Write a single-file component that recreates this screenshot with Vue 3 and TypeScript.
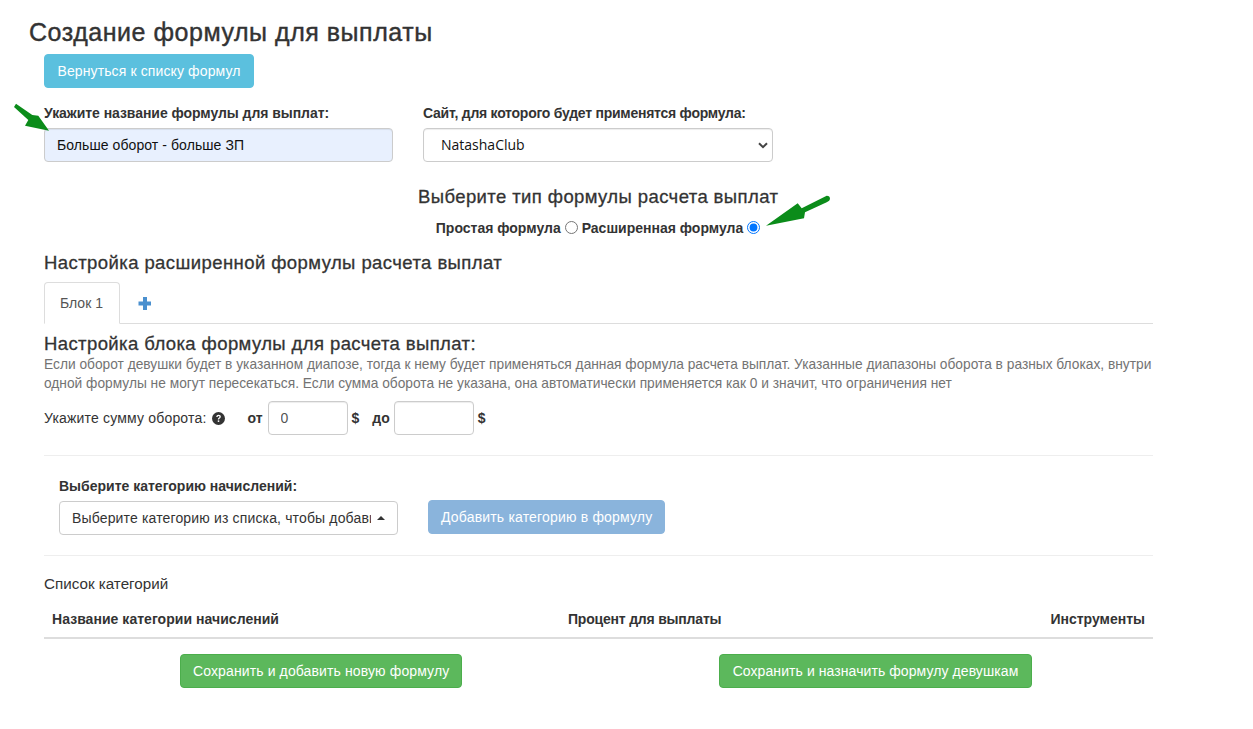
<script setup lang="ts">
const helpText =
  'Если оборот девушки будет в указанном диапозе, тогда к нему будет применяться данная формула расчета выплат. Указанные диапазоны оборота в разных блоках, внутри одной формулы не могут пересекаться. Если сумма оборота не указана, она автоматически применяется как 0 и значит, что ограничения нет'
</script>

<template>
  <div class="page">
    <h1 class="title">Создание формулы для выплаты</h1>
    <div class="content">
      <button class="btn info">Вернуться к списку формул</button>

      <div class="top-fields">
        <div class="field name-field">
          <label class="lbl">Укажите название формулы для выплат:</label>
          <input class="control filled" value="Больше оборот - больше ЗП" />
        </div>
        <div class="field site-field">
          <label class="lbl site-lbl">Сайт, для которого будет применятся формула:</label>
          <div class="select-wrap">
            <select class="control site-select">
              <option>NatashaClub</option>
            </select>
            <svg class="chevron" width="10" height="7" viewBox="0 0 10 7">
              <path d="M1 1.2 L5 5.2 L9 1.2" fill="none" stroke="#444" stroke-width="2" />
            </svg>
          </div>
        </div>
      </div>

      <h4 class="type-heading">Выберите тип формулы расчета выплат</h4>
      <div class="type-row">
        <label class="radio-lbl">Простая формула <input type="radio" name="t" /></label>
        <label class="radio-lbl">Расширенная формула <input type="radio" name="t" checked /></label>
      </div>

      <h4 class="adv-heading">Настройка расширенной формулы расчета выплат</h4>
      <div class="tabs">
        <div class="tab active">Блок 1</div>
        <div class="tab plus">
          <svg width="14" height="14" viewBox="0 0 14 14">
            <path d="M5 1h4v4.5h4v4H9V14H5V9.5H.5v-4H5z" fill="#4a90cf" />
          </svg>
        </div>
      </div>

      <h4 class="block-heading">Настройка блока формулы для расчета выплат:</h4>
      <p class="help">{{ helpText }}</p>

      <div class="turnover">
        <span class="turnover-label">Укажите сумму оборота:</span>
        <svg class="q" width="13" height="13" viewBox="0 0 14 14">
          <circle cx="7" cy="7" r="7" fill="#333" />
          <path d="M4.6 5.3c.1-1.5 1.1-2.3 2.5-2.3s2.4.8 2.4 2c0 1-.6 1.5-1.2 1.9-.5.3-.7.6-.7 1.2H6.3c0-1 .3-1.5 1-2 .5-.3.8-.6.8-1 0-.5-.4-.8-1-.8s-1 .4-1.1 1z" fill="#fff" />
          <rect x="6.2" y="9" width="1.6" height="1.7" fill="#fff" />
        </svg>
        <b class="from">от</b>
        <input class="control small" value="0" />
        <b class="dollar">$</b>
        <b class="to">до</b>
        <input class="control small" />
        <b class="dollar">$</b>
      </div>

      <hr class="rule first" />

      <div class="category">
        <div class="cat-field">
          <label class="lbl cat-lbl">Выберите категорию начислений:</label>
          <div class="dropdown">
            <span class="dropdown-text">Выберите категорию из списка, чтобы добавить</span>
            <span class="caret"></span>
          </div>
        </div>
        <button class="btn primary-disabled">Добавить категорию в формулу</button>
      </div>

      <hr class="rule second" />

      <div class="list-title">Список категорий</div>
      <div class="table-head">
        <span class="col-name">Название категории начислений</span>
        <span class="col-percent">Процент для выплаты</span>
        <span class="col-tools">Инструменты</span>
      </div>

      <div class="actions">
        <button class="btn success">Сохранить и добавить новую формулу</button>
        <button class="btn success tight">Сохранить и назначить формулу девушкам</button>
      </div>
    </div>

    <svg class="arrow arrow-a" width="40" height="32" viewBox="0 0 40 32">
      <path d="M2 .7 L18.3 12 L24.3 12.7 L35 27.7 L11 22.7 L14.3 17 L0 4 Z" fill="#0b8c1a" />
    </svg>
    <svg class="arrow arrow-b" width="70" height="42" viewBox="0 0 70 42">
      <path d="M1 31.7 L32.7 9.3 L36.7 14.3 L61.7 1.7 Q65 1.7 65 5 Q65 7 61.7 8.3 L40 18.3 L39 24.3 Z" fill="#0b8c1a" />
    </svg>
  </div>
</template>

<style>
body { background: #fff; }
</style>

<style scoped>
.page {
  position: relative;
  height: 729px;
  overflow: hidden;
  font-family: "Liberation Sans", Arial, sans-serif;
  font-size: 14px;
  line-height: 20px;
  color: #333;
  background: #fff;
}
.title {
  margin: 0;
  padding: 18px 0 0 29px;
  font-size: 25px;
  letter-spacing: .53px;
  line-height: 28px;
  font-weight: 400;
  color: #333;
  -webkit-text-stroke: .4px #333;
}
.content {
  width: 1109px;
  margin: 8px 0 0 44px;
}
.btn {
  display: inline-block;
  height: 34px;
  padding: 0 12px;
  border: 1px solid transparent;
  border-radius: 4px;
  font: inherit;
  letter-spacing: .12px;
  color: #fff;
  white-space: nowrap;
}
.info { width: 210px; background: #5bc0de; border-color: #5bc0de; display: block; }
.success { background: #5cb85c; border-color: #4cae4c; }
.tight { letter-spacing: .08px; }
.primary-disabled { width: 237px; background: #8ab4dc; border-color: #8ab4dc; letter-spacing: .18px; }
.top-fields { display: flex; gap: 30px; margin-top: 15px; }
.name-field { width: 349px; }
.site-field { width: 350px; }
.lbl { display: block; font-weight: 700; margin-bottom: 5px; letter-spacing: -.05px; }
.site-lbl { letter-spacing: -.25px; }
.cat-lbl { letter-spacing: 0; }
.control {
  box-sizing: border-box;
  display: block;
  width: 100%;
  height: 34px;
  padding: 6px 12px;
  border: 1px solid #ccc;
  border-radius: 4px;
  background: #fff;
  font: inherit;
  color: #111;
  box-shadow: inset 0 1px 1px rgba(0, 0, 0, .075);
  outline: none;
}
.filled { background: #e8f0fe; color: #111; letter-spacing: .08px; }
.select-wrap { position: relative; }
.site-select {
  appearance: none;
  padding-left: 17px;
  font-family: "Open Sans", sans-serif;
}
.chevron { position: absolute; right: 5px; top: 14px; pointer-events: none; }
.type-heading {
  margin: 25px 0 0;
  width: 1108px;
  box-sizing: border-box;
  padding-left: 374px;
  font-size: 18.5px;
  letter-spacing: .4px;
  line-height: 20px;
  font-weight: 400;
  -webkit-text-stroke: .3px #333;
}
.type-row {
  display: flex;
  justify-content: center;
  gap: 4px;
  width: 1108px;
  margin-top: 11px;
}
.radio-lbl { font-weight: 700; display: inline-flex; align-items: center; gap: 4px; }
.radio-lbl input { margin: 0; width: 13px; height: 13px; position: relative; top: -1px; }
.adv-heading {
  margin: 15px 0 0;
  font-size: 18.5px;
  letter-spacing: .42px;
  line-height: 20px;
  font-weight: 400;
  -webkit-text-stroke: .3px #333;
}
.tabs {
  display: flex;
  height: 41px;
  margin-top: 9px;
  border-bottom: 1px solid #ddd;
  box-sizing: content-box;
}
.tab {
  box-sizing: border-box;
  height: 42px;
  padding: 10px 15px;
  border: 1px solid transparent;
  border-radius: 4px 4px 0 0;
}
.tab.active {
  width: 76px;
  color: #555;
  background: #fff;
  border-color: #ddd #ddd #fff;
}
.tab.plus { width: 50px; padding: 12px 0 0 17px; }
.block-heading {
  margin: 10px 0 0;
  font-size: 18.5px;
  letter-spacing: .4px;
  line-height: 20px;
  font-weight: 400;
  color: #333;
  -webkit-text-stroke: .3px #333;
}
.help {
  margin: 1px 0 0;
  font-size: 13.75px;
  line-height: 19px;
  color: #737373;
}
.turnover {
  display: flex;
  align-items: center;
  height: 34px;
  margin-top: 8px;
}
.turnover-label { letter-spacing: .18px; }
.q { margin-left: 5px; }
.from { margin-left: 23px; margin-right: 5px; }
.small { width: 80px; color: #555; }
.dollar { margin-left: 4px; }
.to { margin-left: 13px; margin-right: 4px; }
.rule { margin: 0; border: 0; border-top: 1px solid #eee; }
.rule.first { margin-top: 20px; }
.category {
  display: flex;
  align-items: flex-end;
  gap: 30px;
  margin-top: 20px;
  padding-left: 15px;
}
.cat-field { width: 339px; }
.category .primary-disabled { margin-bottom: 1px; }
.dropdown {
  box-sizing: border-box;
  display: flex;
  align-items: center;
  height: 34px;
  padding: 0 12px;
  border: 1px solid #ccc;
  border-radius: 4px;
  color: #333;
  background: #fff;
}
.dropdown-text {
  flex: 1;
  overflow: hidden;
  white-space: nowrap;
  letter-spacing: .15px;
}
.caret {
  margin-left: 6px;
  width: 0;
  height: 0;
  border-left: 4px solid transparent;
  border-right: 4px solid transparent;
  border-bottom: 4px solid #333;
}
.rule.second { margin-top: 20px; }
.list-title { margin-top: 18px; font-size: 15.2px; }
.table-head {
  display: flex;
  align-items: flex-end;
  box-sizing: content-box;
  height: 31px;
  margin-top: 4px;
  padding: 0 8px 8px;
  border-bottom: 2px solid #ddd;
  font-weight: 700;
}
.col-name { width: 516px; letter-spacing: .04px; }
.col-percent { flex: 1; letter-spacing: -.2px; }
.actions {
  display: flex;
  margin-top: 15px;
  padding-left: 136px;
  gap: 257px;
}
.actions .btn:first-child { width: 282px; }
.actions .btn:last-child { width: 313px; }
.arrow { position: absolute; }
.arrow-a { left: 14px; top: 103px; }
.arrow-b { left: 765px; top: 194px; }
</style>
